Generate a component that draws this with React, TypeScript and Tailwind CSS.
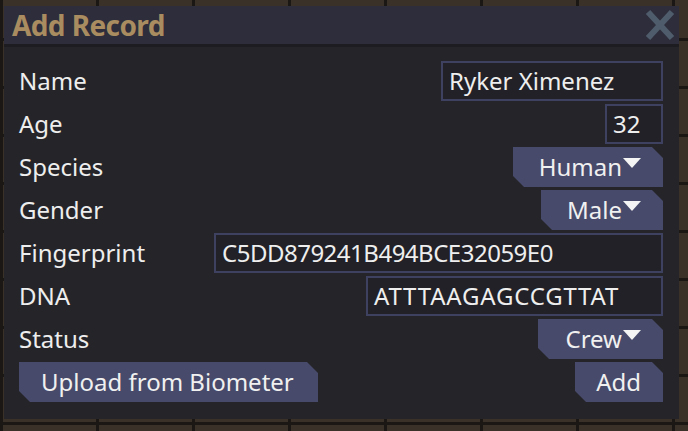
import React from "react";

const FONT = "font-['Noto_Sans',sans-serif]";
const BEVEL =
  "[clip-path:polygon(0_0,calc(100%-11px)_0,100%_11px,100%_100%,11px_100%,0_calc(100%-11px))]";

function Field({ value, width, extra = "" }: { value: string; width: string; extra?: string }) {
  return (
    <div
      className={`${width} h-full border-2 border-[#3f4160] bg-[#212127] px-[6px] flex items-center text-[24px] text-[#eeeeee] leading-none ${extra}`}
    >
      {value}
    </div>
  );
}

function Btn({ children, width }: { children: React.ReactNode; width: string }) {
  return (
    <div
      className={`${width} h-full ${BEVEL} bg-[#474a6a] flex items-center justify-end pr-[22px] text-[24px] text-[#f0f0f0] leading-none`}
    >
      {children}
    </div>
  );
}

function Drop({ label, width }: { label: string; width: string }) {
  return (
    <Btn width={width}>
      <span>{label}</span>
      <svg width="18" height="11" viewBox="0 0 18 11" className="ml-[1px] -mt-[7px]">
        <polygon points="0,0 18,0 9,10" fill="#f4f4f4" />
      </svg>
    </Btn>
  );
}

function Row({ label, children }: { label: string; children: React.ReactNode }) {
  return (
    <div className="h-[40px] flex items-center justify-between">
      <span className="text-[24px] text-[#eeeeee] leading-none">{label}</span>
      {children}
    </div>
  );
}

export default function App() {
  return (
    <div
      className={`${FONT} w-[688px] h-[431px] overflow-hidden bg-[#3a3129] pl-[4px] pt-[6px] bg-[linear-gradient(#1b1714_3px,transparent_3px),linear-gradient(90deg,#1b1714_3px,transparent_3px)] bg-[length:96px_48px] [background-position:0_422px]`}
    >
      <div className="w-[675px] h-[413px] flex flex-col bg-[#252529]">
        {/* Title bar */}
        <div className="h-[38px] bg-[#2d2d3b] flex items-center justify-between pl-[8px] pr-[2px]">
          <span className="text-[28px] font-bold text-[#a98c60] leading-none tracking-[-0.6px]">
            Add Record
          </span>
          <svg width="34" height="34" viewBox="0 0 34 34">
            <path d="M5 4 L29 30 M29 4 L5 30" stroke="#4f5c6b" strokeWidth="6" strokeLinecap="butt" />
          </svg>
        </div>
        <div className="h-[3px] bg-[#1d1d21]" />

        {/* Content */}
        <div className="flex flex-col gap-[3px] pl-[15px] pr-[16px] pt-[14px]">
          <Row label="Name">
            <Field value="Ryker Ximenez" width="w-[222px]" />
          </Row>
          <Row label="Age">
            <Field value="32" width="w-[58px]" />
          </Row>
          <Row label="Species">
            <Drop label="Human" width="w-[150px]" />
          </Row>
          <Row label="Gender">
            <Drop label="Male" width="w-[122px]" />
          </Row>
          <Row label="Fingerprint">
            <Field value="C5DD879241B494BCE32059E0" width="w-[449px]" extra="tracking-[-0.5px]" />
          </Row>
          <Row label="DNA">
            <Field value="ATTTAAGAGCCGTTAT" width="w-[297px]" extra="tracking-[0.8px]" />
          </Row>
          <Row label="Status">
            <Drop label="Crew" width="w-[125px]" />
          </Row>
          <div className="h-[40px] flex items-center justify-between">
            <div className={`w-[299px] h-full ${BEVEL} bg-[#474a6a] flex items-center pl-[22px] text-[24px] text-[#f0f0f0] leading-none`}>
              Upload from Biometer
            </div>
            <Btn width="w-[88px]">Add</Btn>
          </div>
        </div>
      </div>
    </div>
  );
}
